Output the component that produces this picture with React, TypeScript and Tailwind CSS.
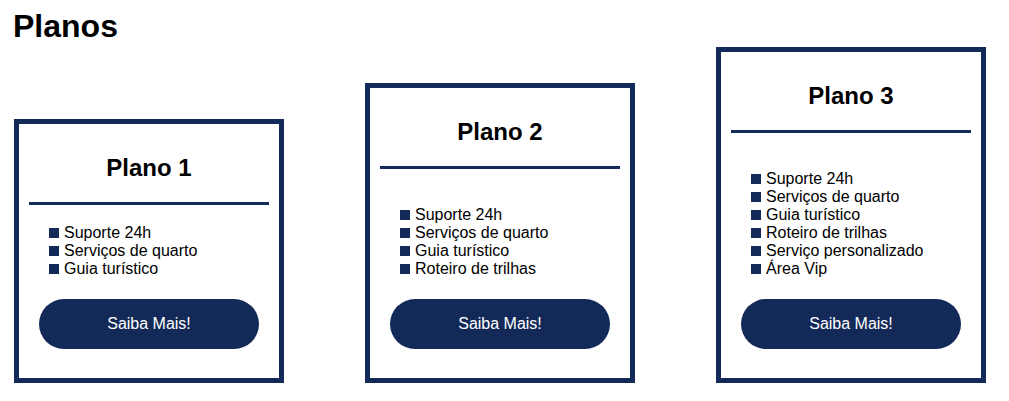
import React from 'react';

interface Plan {
  name: string;
  items: string[];
  listGap: string;
}

const plans: Plan[] = [
  {
    name: 'Plano 1',
    items: ['Suporte 24h', 'Serviços de quarto', 'Guia turístico'],
    listGap: 'mt-[19px]',
  },
  {
    name: 'Plano 2',
    items: ['Suporte 24h', 'Serviços de quarto', 'Guia turístico', 'Roteiro de trilhas'],
    listGap: 'mt-[37px]',
  },
  {
    name: 'Plano 3',
    items: [
      'Suporte 24h',
      'Serviços de quarto',
      'Guia turístico',
      'Roteiro de trilhas',
      'Serviço personalizado',
      'Área Vip',
    ],
    listGap: 'mt-[37px]',
  },
];

const PlanCard: React.FC<{ plan: Plan }> = ({ plan }) => (
  <div className="w-[270px] border-[5px] border-[#132a58] bg-white pt-[30px] pb-[29px] flex flex-col">
    <h2 className="text-[24px] leading-[28px] font-bold text-center text-black">{plan.name}</h2>
    <div className="mt-[20px] mx-[10px] h-[3px] bg-[#132a58]"></div>

    {/* list sits right above the button */}
    <ul className={`${plan.listGap} pl-[30px]`}>
      {plan.items.map((item) => (
        <li key={item} className="flex items-center gap-[5px] text-[16px] leading-[18px] text-black">
          <span className="w-[10px] h-[10px] bg-[#132a58] shrink-0"></span>
          {item}
        </li>
      ))}
    </ul>

    <button className="mt-[21px] mx-[20px] h-[50px] rounded-full bg-[#132a58] text-white text-[16px]">
      Saiba Mais!
    </button>
  </div>
);

const App: React.FC = () => {
  return (
    <div className="min-h-screen bg-white px-[14px] pt-[8px] font-['Liberation_Sans',Arial,sans-serif]">
      <h1 className="text-[32px] leading-[37px] font-bold text-black -ml-px">Planos</h1>
      <div className="mt-[2px] flex items-end gap-[81px]">
        {plans.map((p) => (
          <PlanCard key={p.name} plan={p} />
        ))}
      </div>
    </div>
  );
};

export default App;
